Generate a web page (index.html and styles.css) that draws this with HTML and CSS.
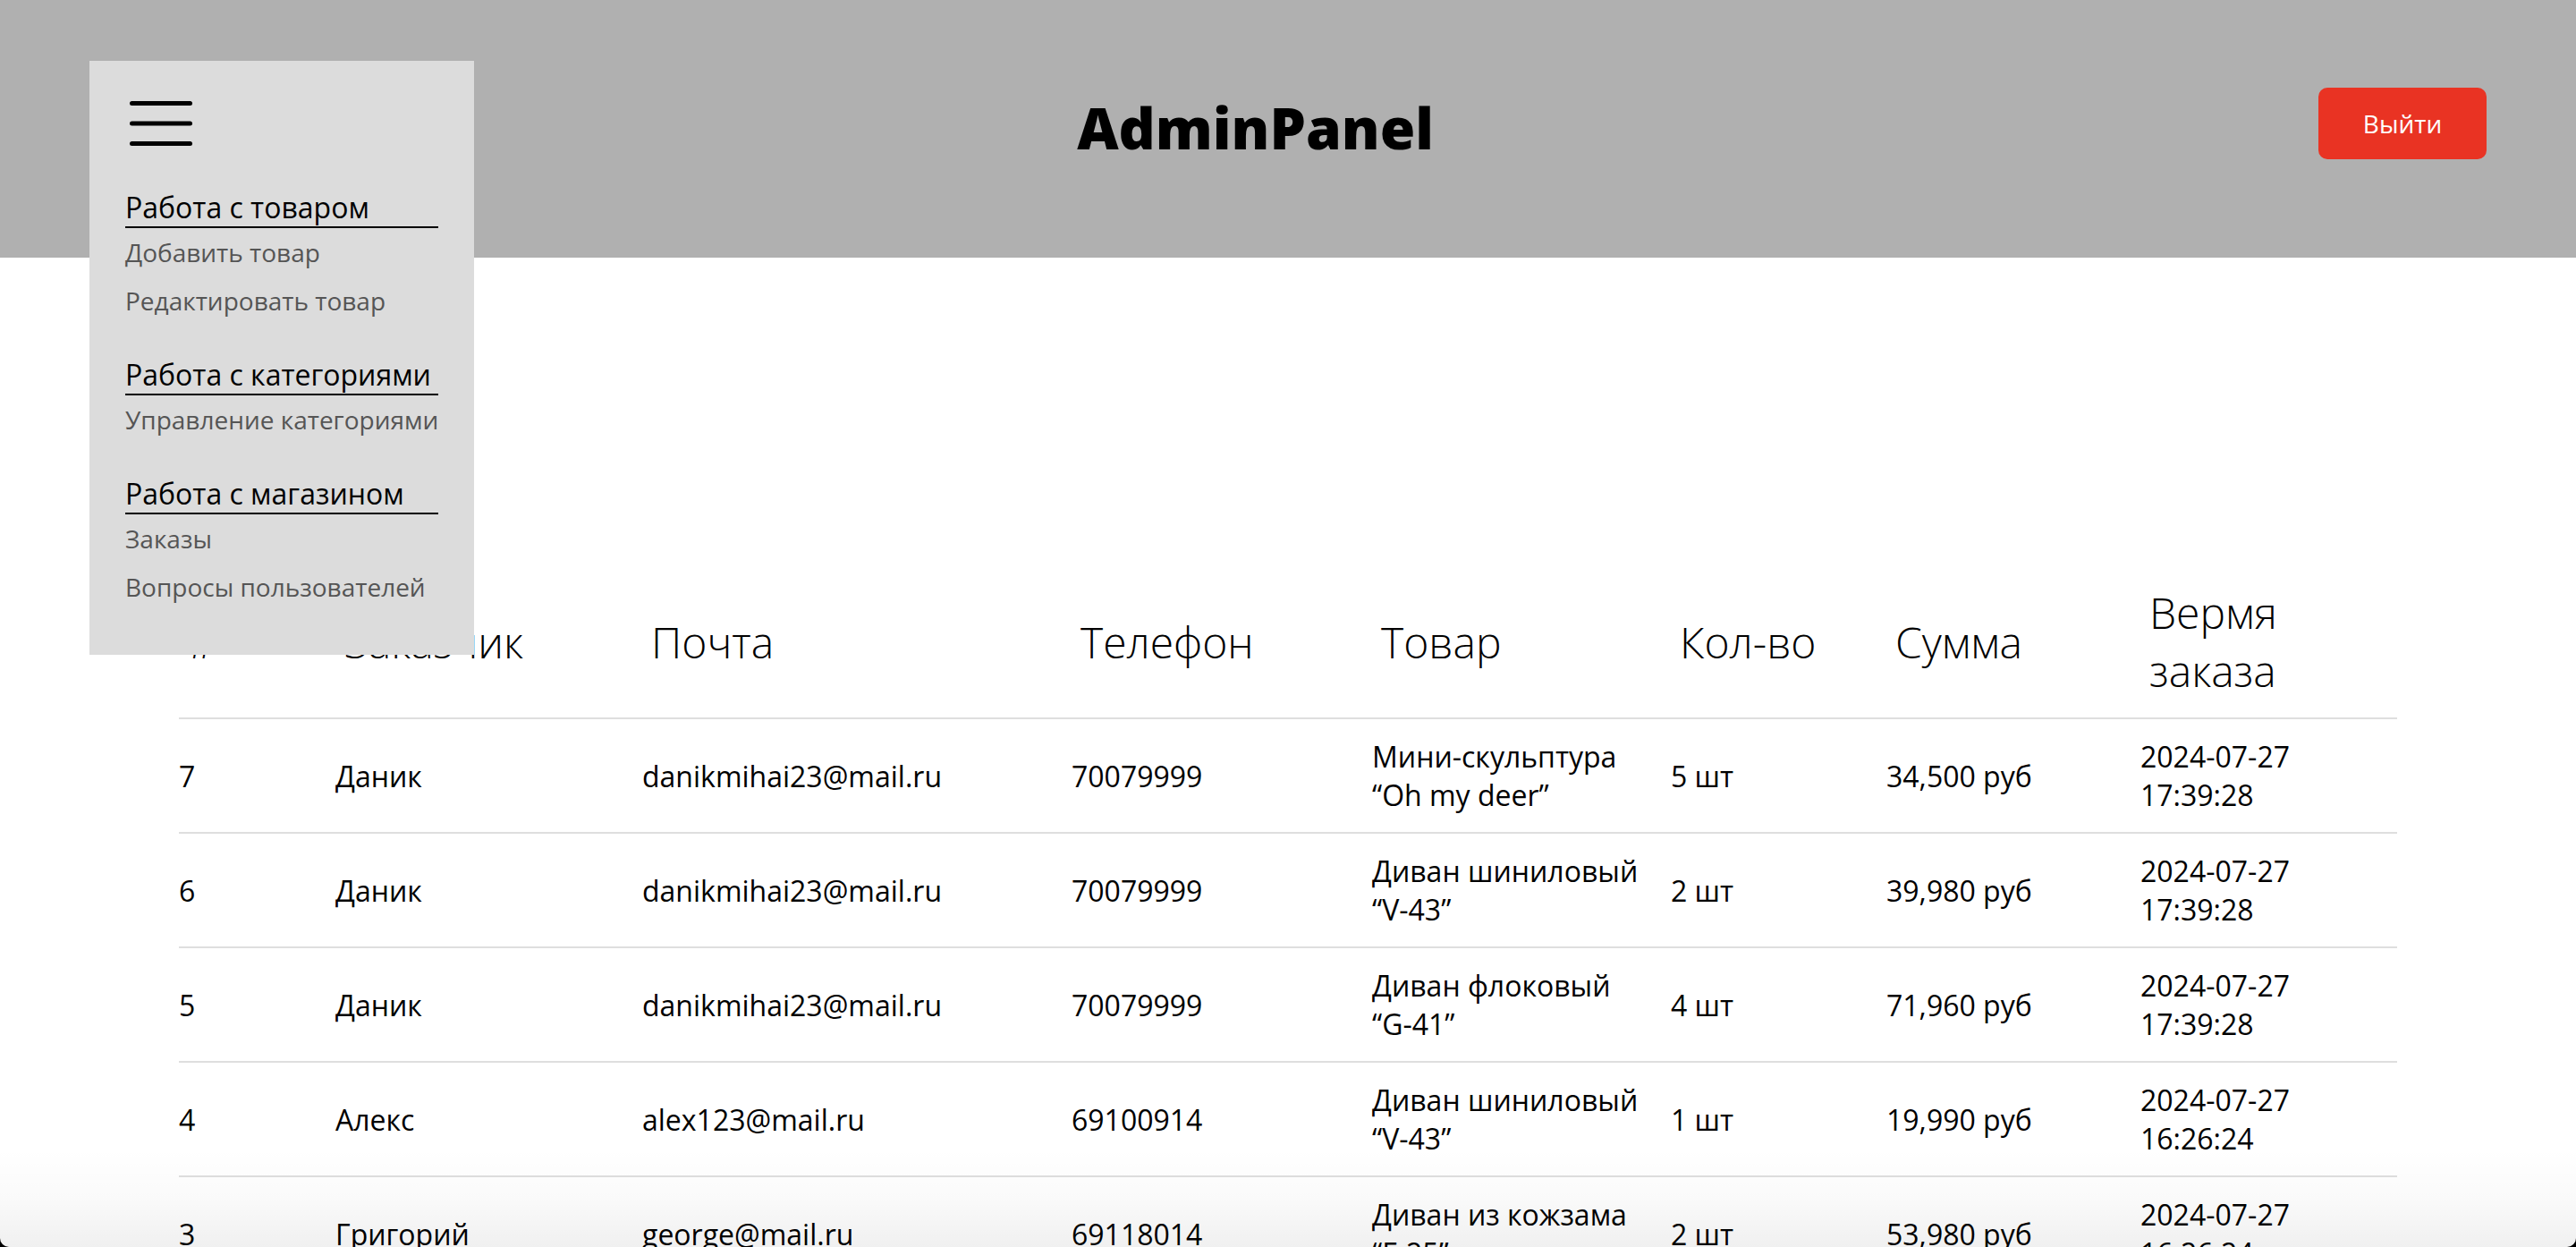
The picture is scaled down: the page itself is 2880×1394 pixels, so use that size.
FILE: index.html
```html
<!DOCTYPE html>
<html lang="ru">
<head>
<meta charset="utf-8">
<title>AdminPanel</title>
<link rel="stylesheet" href="styles.css">
</head>
<body>
<div class="page">
  <header class="topbar">
    <div class="burger-slot"></div>
    <h1 class="brand">AdminPanel</h1>
    <button class="logout" type="button">Выйти</button>
  </header>

  <nav class="menu">
    <svg class="burger" width="80" height="50" viewBox="0 0 80 50" aria-hidden="true">
      <g stroke="#000" stroke-width="5" stroke-linecap="round">
        <line x1="7.5" y1="2.5" x2="72.5" y2="2.5"/>
        <line x1="7.5" y1="25" x2="72.5" y2="25"/>
        <line x1="7.5" y1="47.5" x2="72.5" y2="47.5"/>
      </g>
    </svg>
    <div class="menu-group">
      <div class="menu-title">Работа с товаром</div>
      <a class="menu-link" href="#">Добавить товар</a>
      <a class="menu-link" href="#">Редактировать товар</a>
    </div>
    <div class="menu-group">
      <div class="menu-title">Работа с категориями</div>
      <a class="menu-link" href="#">Управление категориями</a>
    </div>
    <div class="menu-group">
      <div class="menu-title">Работа с магазином</div>
      <a class="menu-link" href="#">Заказы</a>
      <a class="menu-link" href="#">Вопросы пользователей</a>
    </div>
  </nav>

  <main class="content">
    <table class="orders">
      <colgroup>
        <col class="col-id"><col class="col-name"><col class="col-mail"><col class="col-phone">
        <col class="col-item"><col class="col-qty"><col class="col-sum"><col class="col-time">
      </colgroup>
      <thead>
        <tr>
          <th>#</th><th>Заказчик</th><th>Почта</th><th>Телефон</th><th>Товар</th><th>Кол-во</th><th>Сумма</th><th>Вермя заказа</th>
        </tr>
      </thead>
      <tbody>
        <tr><td>7</td><td>Даник</td><td>danikmihai23@mail.ru</td><td>70079999</td><td>Мини-скульптура “Oh my deer”</td><td>5 шт</td><td>34,500 руб</td><td>2024-07-27 17:39:28</td></tr>
        <tr><td>6</td><td>Даник</td><td>danikmihai23@mail.ru</td><td>70079999</td><td>Диван шиниловый “V-43”</td><td>2 шт</td><td>39,980 руб</td><td>2024-07-27 17:39:28</td></tr>
        <tr><td>5</td><td>Даник</td><td>danikmihai23@mail.ru</td><td>70079999</td><td>Диван флоковый “G-41”</td><td>4 шт</td><td>71,960 руб</td><td>2024-07-27 17:39:28</td></tr>
        <tr><td>4</td><td>Алекс</td><td>alex123@mail.ru</td><td>69100914</td><td>Диван шиниловый “V-43”</td><td>1 шт</td><td>19,990 руб</td><td>2024-07-27 16:26:24</td></tr>
        <tr><td>3</td><td>Григорий</td><td>george@mail.ru</td><td>69118014</td><td>Диван из кожзама “F-25”</td><td>2 шт</td><td>53,980 руб</td><td>2024-07-27 16:26:24</td></tr>
      </tbody>
    </table>
  </main>

  <div class="shade"></div>
</div>
</body>
</html>
```

FILE: styles.css
```css
* { box-sizing: border-box; }

html, body {
  margin: 0;
  padding: 0;
  background: #000;
  overflow: hidden;
}

body {
  font-family: "Open Sans", "Noto Sans", sans-serif;
  color: #000;
}

.page {
  position: relative;
  height: 100vh;
  overflow: hidden;
  background: #fff;
  border-radius: 0 0 10px 10px;
}

/* ---------- top bar ---------- */
.topbar {
  height: 288px;
  background: #b0b0b0;
  display: flex;
  align-items: center;
  justify-content: space-between;
  padding: 0 100px;
}

.burger-slot { width: 115px; }

.brand {
  margin: 0 0 2px;
  font-size: 64px;
  font-weight: 800;
  line-height: 1;
  letter-spacing: 0;
}

.logout {
  width: 188px;
  height: 80px;
  margin-bottom: 12px;
  border: 0;
  border-radius: 10px;
  background: #e93323;
  color: #fff;
  font-family: "Open Sans", "Noto Sans", sans-serif;
  font-size: 28px;
  font-weight: 400;
  cursor: pointer;
}

/* ---------- dropdown menu ---------- */
.menu {
  position: absolute;
  left: 100px;
  top: 68px;
  width: 430px;
  padding: 45px 40px 49px;
  background: #dcdcdc;
}

.burger {
  display: block;
  margin-bottom: 49px;
}

.menu-group + .menu-group { margin-top: 36px; }

.menu-title {
  font-size: 32px;
  line-height: 40px;
  padding-bottom: 1px;
  border-bottom: 2px solid #000;
  color: #000;
  white-space: nowrap;
}

.menu-link {
  display: block;
  font-size: 28px;
  line-height: 54px;
  color: #555;
  text-decoration: none;
  white-space: nowrap;
}

/* ---------- orders table ---------- */
.content {
  padding: 344px 200px 0;
}

.orders {
  width: 2480px;
  border-collapse: collapse;
  table-layout: fixed;
}

.col-id   { width: 175px; }
.col-name { width: 343px; }
.col-mail { width: 480px; }
.col-phone{ width: 336px; }
.col-item { width: 334px; }
.col-qty  { width: 241px; }
.col-sum  { width: 284px; }
.col-time { width: 287px; }

.orders th {
  font-size: 48px;
  font-weight: 300;
  text-align: left;
  vertical-align: middle;
  padding: 20px 16px 20px 10px;
  border-bottom: 2px solid #dedede;
}

.orders td {
  font-size: 32px;
  line-height: 43px;
  vertical-align: middle;
  padding: 20px 20px 20px 0;
  border-bottom: 2px solid #dedede;
}

/* subtle window shade at the bottom edge */
.shade {
  position: absolute;
  left: 0;
  right: 0;
  bottom: 0;
  height: 110px;
  pointer-events: none;
  background: linear-gradient(to bottom, rgba(0,0,0,0) 0%, rgba(0,0,0,0.02) 50%, rgba(0,0,0,0.06) 100%);
}
```
